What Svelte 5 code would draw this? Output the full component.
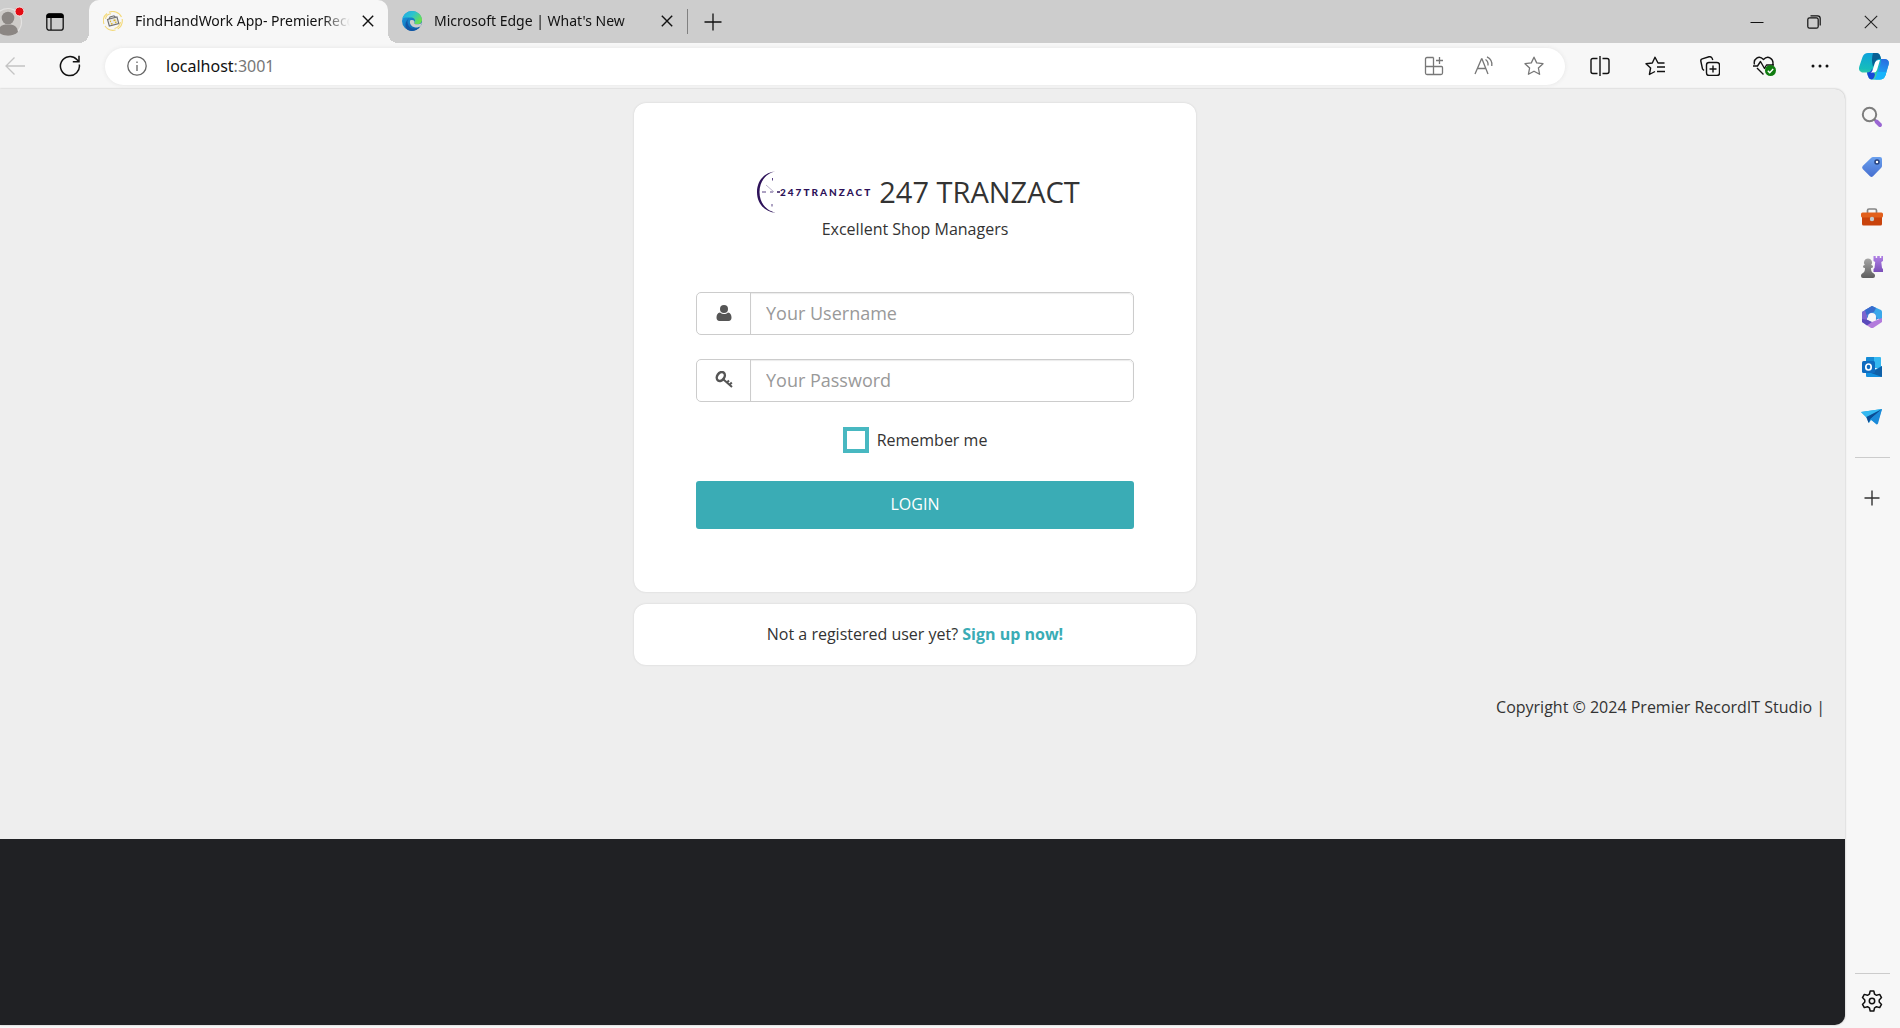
<script>
  let username = $state('');
  let password = $state('');
  let remember = $state(false);
</script>

{#snippet cross(size)}
  <svg width={size} height={size} viewBox="0 0 12 12" fill="none" stroke="currentColor" stroke-width="1.4"><path d="M.8.8l10.4 10.4M11.2.8L.8 11.2" /></svg>
{/snippet}

<div class="window">
  <header class="titlebar">
    <button class="avatar" aria-label="Profile">
      <svg width="30" height="30" viewBox="0 0 30 30">
        <circle cx="15" cy="15" r="13.5" fill="#cfccc9" stroke="#e4e3e2" stroke-width="1.2" />
        <circle cx="15" cy="11" r="6.3" fill="#8b8683" />
        <path d="M5 25c1-6 4-7.500 10-7.500s9 1.500 10 7.500c-5 5-15 5-20 0z" fill="#8b8683" />
        <circle cx="26.500" cy="4.500" r="4.500" fill="#e30b13" stroke="#f3e3e3" stroke-width="1" />
      </svg>
    </button>
    <button class="tab-actions" aria-label="Tab actions">
      <svg width="18" height="18" viewBox="0 0 18 18"><rect x=".8" y=".8" width="16.400" height="16.400" rx="2.500" fill="none" stroke="#111" stroke-width="1.300" /><path d="M.5 5V3Q.5.500 3 .5h12Q17.500.500 17.500 3v2z" fill="#000" /><path d="M5 5v12" stroke="#111" stroke-width="1.200" /></svg>
    </button>
    <div class="tab active">
      <svg width="20" height="20" viewBox="0 0 20 20" fill="none">
        <path d="M1 13A9.400 9.400 0 0 1 4 2.500M6 1.300C10-.5 16 .5 18.500 6M19.200 8c.5 4-1 8-4.500 10M12.500 19C8 20 4 18 2 15M2.500 8C3 5 5 3 8 2.800M17.500 11c-.5 3.500-2.500 5.500-6 6.500" stroke="#f3d979" stroke-width="1.100" />
        <path d="M4.500 8.500l9.500-2.500 1.800 6.500-9.500 2.500zM6 8l1-2 4-1.200 1.500 1.500" fill="#e9e9e6" stroke="#707070" stroke-width="1.100" />
        <path d="M7 10.500l1-.3M10.500 9.500l2-.5M8 13l1.500-.4M12 11.500l1.500-.4" stroke="#d9b429" stroke-width="1.500" />
      </svg>
      <span class="tab-title">FindHandWork App- PremierReco</span>
      <button class="tab-close" aria-label="Close tab">{@render cross(12)}</button>
    </div>
    <div class="tab">
      <svg width="20" height="20" viewBox="0 0 20 20">
        <defs>
          <linearGradient id="edgeTop" x1="0" y1="0" x2="1" y2=".6"><stop offset="0" stop-color="#1ea7e6" /><stop offset=".5" stop-color="#2cc3cf" /><stop offset="1" stop-color="#6be04f" /></linearGradient>
          <linearGradient id="edgeLow" x1="0" y1="0" x2="1" y2="1"><stop offset="0" stop-color="#1b9de2" /><stop offset="1" stop-color="#0c59a4" /></linearGradient>
        </defs>
        <circle cx="10" cy="10" r="10" fill="url(#edgeLow)" />
        <path d="M.3 8C1.500 3 5.500 0 10 0c6 0 10 4.500 10 8.700 0 3-2.300 4.600-5 4.600-2.200 0-3.300-.8-2.700-1.600 1.700-2.400.2-5.200-3.500-5.200C5 6.500 1.500 6 .3 8z" fill="url(#edgeTop)" />
        <path d="M8.800 6.500c-3.500 1-4.300 5-2.200 8.300 2 3 6.500 4.200 11.500 1.200C14 20.500 9 20.700 6 19 2 16.500 2.500 9 8.800 6.500z" fill="#1256a5" />
        <path d="M8.300 9.300c-1.300 2.700.5 6.500 5 7.200 2.300.2 4-.5 5.300-1.200l1.400-3.800c-1.500 1.500-3.300 1.800-5 1.800-2.200 0-3.300-.8-2.700-1.600.9-1.200-.6-3.800-4-2.400z" fill="#cdcdcd" />
      </svg>
      <span class="tab-title">Microsoft Edge | What's New</span>
      <button class="tab-close" aria-label="Close tab">{@render cross(12)}</button>
    </div>
    <button class="new-tab" aria-label="New tab">
      <svg width="18" height="18" viewBox="0 0 18 18" stroke="#111" stroke-width="1.300"><path d="M9 .5v17M.5 9h17" /></svg>
    </button>
    <div class="window-controls">
      <button aria-label="Minimize"><svg width="14" height="14" viewBox="0 0 14 14" stroke="#111"><path d="M.5 7.500h13" /></svg></button>
      <button aria-label="Restore"><svg width="14" height="14" viewBox="0 0 14 14" fill="none" stroke="#111" stroke-width="1.200"><rect x=".8" y="2.800" width="10.400" height="10.400" rx="1.800" /><path d="M3.500.8h7Q13.200.8 13.200 3.500v7" /></svg></button>
      <button aria-label="Close window"><svg width="14" height="14" viewBox="0 0 14 14" fill="none" stroke="#222" stroke-width="1.100"><path d="M.8.8l12.400 12.400M13.200.8L.8 13.200" /></svg></button>
    </div>
  </header>

  <div class="toolbar">
    <button class="nav back" aria-label="Back">
      <svg width="20" height="20" viewBox="0 0 20 20" fill="none" stroke="#c4c4c4" stroke-width="1.300"><path d="M20 10H1M9.500 1.500L1 10l8.500 8.500" /></svg>
    </button>
    <button class="nav refresh" aria-label="Refresh">
      <svg width="22" height="22" viewBox="0 0 22 22" fill="none" stroke="#111" stroke-width="1.500"><path d="M20.300 9.500A9.500 9.500 0 1 1 17.800 4.500L20 6.800M20 .8v6h-6.200" /></svg>
    </button>
    <div class="address">
      <svg class="info" width="20" height="20" viewBox="0 0 20 20" fill="none" stroke="#666" stroke-width="1.300"><circle cx="10" cy="10" r="9.200" /><path d="M10 9v6M10 5.500v1.600" /></svg>
      <div class="url"><span>localhost</span>:3001</div>
      <button aria-label="App available">
        <svg width="20" height="20" viewBox="0 0 20 20" fill="none" stroke="#777" stroke-width="1.300"><path d="M9.500 1.500H3Q1.500 1.500 1.500 3v14Q1.500 18.500 3 18.500h14q1.500 0 1.500-1.500v-5.500q0-1-1-1H1.500M9.500 1.500v17M15.500 1v7M12 4.500h7" /></svg>
      </button>
      <button aria-label="Read aloud">
        <svg width="20" height="20" viewBox="0 0 20 20" fill="none" stroke="#777" stroke-width="1.300"><path d="M1 18L7.500 3h.5l6 15M3.300 12.500h8.500M11.500 3.500q3 2 2.500 6M13 .8q5.800 3 4.800 9.200" /></svg>
      </button>
      <button aria-label="Add to favorites">
        <svg width="20" height="20" viewBox="0 0 20 20" fill="none" stroke="#777" stroke-width="1.300" stroke-linejoin="round"><path d="M10 1.200l2.700 5.700 6.300.8-4.600 4.300 1.200 6.300L10 15.200l-5.600 3.100L5.600 12 1 7.700l6.300-.8z" /></svg>
      </button>
    </div>
    <div class="tools">
      <button aria-label="Split screen"><svg width="20" height="20" viewBox="0 0 20 20" fill="none" stroke="#111" stroke-width="1.400"><path d="M7.500 2.500H3Q1 2.500 1 4.500v11q0 2 2 2h4.500M12.500 2.500H17q2 0 2 2v11q0 2-2 2h-4.500M10 0v20" /></svg></button>
      <button aria-label="Favorites"><svg width="20" height="20" viewBox="0 0 20 20" fill="none" stroke="#111" stroke-width="1.400" stroke-linejoin="round"><path d="M19.500 7H13L10 1.200 7.300 7 1 7.800 5.600 12l-1.200 6.500L10 15.500M12 11h8M12 15.500h8" /></svg></button>
      <button aria-label="Collections"><svg width="20" height="20" viewBox="0 0 20 20" fill="none" stroke="#111" stroke-width="1.400"><path d="M4 14.500L2.500 13 .8 5Q.5 3.300 2.200 2.800L9 .8q2-.5 3 1.200l.8 2" /><rect x="6.500" y="6.500" width="13" height="13" rx="2.500" /><path d="M13 9.500v7M9.500 13h7" /></svg></button>
      <button aria-label="Browser essentials"><svg width="24" height="20" viewBox="0 0 24 20" fill="none" stroke="#111" stroke-width="1.400" stroke-linejoin="round"><path d="M1.500 8.500C0 3 6-1.500 10.500 3.500 15-1.500 21 3 19.800 8.500M0 10h4.500L7.500 5.500l4 7L13.500 9H21M4 12l6.500 6.500" /><circle cx="17.500" cy="14.500" r="5.500" fill="#107c10" stroke="none" /><path d="M14.800 14.800l1.900 1.900 3.500-3.700" stroke="#fff" /></svg></button>
      <button aria-label="Settings and more"><svg width="18" height="18" viewBox="0 0 18 18" fill="#111"><circle cx="2" cy="9" r="1.500" /><circle cx="9" cy="9" r="1.500" /><circle cx="16" cy="9" r="1.500" /></svg></button>
      <button class="copilot" aria-label="Copilot">
        <svg width="30" height="28" viewBox="0 0 30 28">
          <defs>
            <linearGradient id="copA" x1=".3" y1="0" x2=".2" y2="1"><stop offset="0" stop-color="#0ea2dc" /><stop offset=".6" stop-color="#16bdbb" /><stop offset="1" stop-color="#66df8b" /></linearGradient>
            <linearGradient id="copB" x1=".6" y1="0" x2=".4" y2="1"><stop offset="0" stop-color="#2a6ddf" /><stop offset="1" stop-color="#16b5fb" /></linearGradient>
          </defs>
          <path d="M12 1h6q3 0 4 6h4q5 1 3.500 6l-3 10q-1.300 4.500-6 4.500h-8q-3.500-.5-4.500-7H3q-4-1-2.700-6L3.500 5Q5 1 9 1z" fill="url(#copA)" />
          <path d="M14 1h4q3 0 4 6-4-1-6 4l-2 4q-2-8 0-14z" fill="#075f93" />
          <path d="M22 7h4q5 1 3.500 6l-3 10q-1.300 4.500-6 4.500h-4l5-16q.5-2.500.5-4.500z" fill="url(#copB)" />
          <path d="M8 20.500q4 0 5-4l3 6q-1 5-3.500 5-3.500-.5-4.500-7z" fill="#1748d8" />
          <path d="M16 27.500h5q4 0 5.500-4.500l.8-3h-9q-1 7.500-5.800 7.500z" fill="#18b4fb" />
          <path d="M13.500 18.500l2.500-8q.8-2.500 3.500-2.500h1.500l-3 10q-.8 2.500-3.500 2.500h-3q1.500-.5 2-2z" fill="#fff" />
        </svg>
      </button>
    </div>
  </div>

  <div class="body">
    <div class="viewport">
      <main>
        <section class="card login">
          <h1>
            <svg class="logo" width="123" height="42" viewBox="0 0 123 42" role="img" aria-label="247Tranzact logo">
              <path d="M26 .3C15 1 7 9 7 21s8 20 19 20.700C16.500 40 9.500 32 9.500 21S16.500 2 26 .3z" fill="#2d1259" />
              <path d="M12 21h4M20 21h3M22.500 7v2.500M22 33v2.500" stroke="#5b4585" />
              <path d="M16 14l8 7" stroke="#bbb3cc" />
              <path d="M27 21h3" stroke="#2d1259" stroke-width="1.300" />
              <text x="30" y="25">247TRANZACT</text>
            </svg>
            <span>247 TRANZACT</span>
          </h1>
          <p class="tagline">Excellent Shop Managers</p>
          <form onsubmit={(e) => e.preventDefault()}>
            <div class="field">
              <label for="username" aria-label="Username">
                <svg width="16" height="16" viewBox="0 0 16 16" fill="#555"><circle cx="8" cy="4" r="4" /><path d="M4 7.500c2.500 2 5.500 2 8 0 2.500.3 3.500 2.500 3.500 5 0 2-1 3.500-3 3.500h-9c-2 0-3-1.500-3-3.500 0-2.500 1-4.700 3.500-5z" /></svg>
              </label>
              <input id="username" type="text" placeholder="Your Username" bind:value={username} />
            </div>
            <div class="field">
              <label for="password" aria-label="Password">
                <svg width="18" height="18" viewBox="0 0 18 18" fill="none" stroke="#555" stroke-width="2"><ellipse cx="5.800" cy="5.500" rx="3.600" ry="4.800" transform="rotate(35 5.800 5.500)" stroke-width="2.500" /><path d="M8.500 8.500l8.500 7.500M12 11.500l2-2M14.500 13.800l2.300-2.300" /></svg>
              </label>
              <input id="password" type="password" placeholder="Your Password" bind:value={password} />
            </div>
            <label class="remember"><input type="checkbox" bind:checked={remember} />Remember me</label>
            <button class="submit" type="submit">LOGIN</button>
          </form>
        </section>
        <section class="card signup">Not a registered user yet? <a href="#signup">Sign up now!</a></section>
      </main>
      <footer>Copyright © 2024 Premier RecordIT Studio |</footer>
      <div class="backdrop"></div>
    </div>

    <aside class="sidebar">
      <button aria-label="Search"><svg width="22" height="22" viewBox="0 0 22 22" fill="none"><circle cx="8.500" cy="8.500" r="6.700" stroke="#7d7d7d" stroke-width="2" /><path d="M13.300 13.300l2 2" stroke="#777" stroke-width="2" /><path d="M15.500 15.500l3.500 3.500" stroke="#9a66d2" stroke-width="4" stroke-linecap="round" /></svg></button>
      <button aria-label="Shopping">
        <svg width="22" height="22" viewBox="0 0 22 22"><defs><linearGradient id="tag" x1="0" y1="0" x2="0" y2="1"><stop offset="0" stop-color="#6aa0ee" /><stop offset="1" stop-color="#466fd0" /></linearGradient></defs><path d="M12 1h7q2 0 2 2v7q0 1-1 2l-8 8.300q-1.500 1.200-3 0L1.700 13q-1.200-1.500 0-3L10 2q1-1 2-1z" fill="url(#tag)" /><circle cx="16" cy="6" r="2" fill="#fff" stroke="#28427d" stroke-width="1.500" /></svg>
      </button>
      <button aria-label="Tools"><svg width="22" height="22" viewBox="0 0 22 22"><path d="M6.500 7V4.500Q6.500 3 8 3h6q1.500 0 1.500 1.500V7" fill="none" stroke="#858585" stroke-width="1.700" /><path d="M1 11h20v7q0 1.500-1.500 1.500h-17Q1 19.500 1 18z" fill="#c9430c" /><rect y="6.500" width="22" height="5" rx="1.500" fill="#e2601d" /><circle cx="11" cy="13" r="2.200" fill="#c4c9cb" /></svg></button>
      <button aria-label="Games">
        <svg width="22" height="24" viewBox="0 0 22 24"><defs><linearGradient id="rook" x1="0" y1="0" x2="0" y2="1"><stop offset="0" stop-color="#b181e6" /><stop offset="1" stop-color="#7a4fb8" /></linearGradient><linearGradient id="pawn" x1="0" y1="0" x2="0" y2="1"><stop offset="0" stop-color="#a6a6a6" /><stop offset="1" stop-color="#5e5e5e" /></linearGradient></defs><path d="M12.500 1h2.200v2h1.500V1h2.600v2h1.500V1H22v5l-1.700 1 .7 6 1 1v3h-9.500v-3l1-1 .7-6-1.700-1z" fill="url(#rook)" /><path d="M7 3.500a4 4 0 0 1 3.200 6.500q1.800 0 1.800 1.500t-2 1.500c0 3 .8 4.500 2.500 5.300q1.500.7 1.500 2.200V21q0 2-2 2H2q-2 0-2-2v-.5q0-1.500 1.500-2.200C3.200 17.500 4 16 4 13q-2 0-2-1.500T3.800 10A4 4 0 0 1 7 3.500z" fill="url(#pawn)" /></svg>
      </button>
      <button aria-label="Microsoft 365">
        <svg width="22" height="22" viewBox="0 0 22 22"><path d="M11 0l9 5v6l-5 3-1-5-4-2-6 8-3-2V6z" fill="#3f86db" /><path d="M11 0L1 6v10l5 2.500V9l5-3z" fill="#7d66cf" /><path d="M11 0l9 4q1 .5 1 2v9l-6-4V8l-7-4z" fill="#3aa8ea" /><path d="M11 0l4 2-2 4h-2L5.500 9 4 4z" fill="#386ccd" /><path d="M21 12v4l-9 6q-1 .5-2 0l-6-4 3-1 4-1z" fill="#b37bdc" /><path d="M1 13v3l5 3.500 5-3.500-4-2z" fill="#5a4abb" /><circle cx="11" cy="11" r="4" fill="#f7f7f7" /></svg>
      </button>
      <button aria-label="Outlook"><svg width="22" height="22" viewBox="0 0 22 22"><rect x="5" y="1" width="15" height="11" rx="1" fill="#35b8f1" /><path d="M5 3q0-2 1-2h7v5H5z" fill="#158ad5" /><path d="M5 11l8 3 8-4v10q0 1-1 1H6q-1 0-1-1z" fill="#1490df" /><path d="M21 10L10 17l11 4z" fill="#0f60a8" /><rect x="1" y="5" width="13" height="12" rx="1.500" fill="#0f6cc0" /><ellipse cx="7.500" cy="11" rx="2.700" ry="3" fill="none" stroke="#fff" stroke-width="1.700" /></svg></button>
      <button aria-label="Drop"><svg width="22" height="22" viewBox="0 0 22 22"><path d="M0 6l21-3-5 15-6-4-2 3-3-6z" fill="#229fe0" /><path d="M0 6l21-3L5.500 11z" fill="#34b9f2" /><path d="M21 3L5.500 11l2 6 2-4z" fill="#0c4c94" /><path d="M21 3L9.500 13l6 5.500q1 0 1.500-1z" fill="#1b8ad9" /></svg></button>
      <hr />
      <button class="add" aria-label="Customize"><svg width="16" height="16" viewBox="0 0 16 16" stroke="#333" stroke-width="1.400"><path d="M8 .5v15M.5 8h15" /></svg></button>
      <hr class="bottom-rule" />
      <button class="gear" aria-label="Settings"><svg width="22" height="22" viewBox="0 0 22 22" fill="none" stroke="#111" stroke-width="1.500" stroke-linejoin="round"><path d="M9.200 1h3.600l.8 3.200 1.900 1.100 3.200-.9 1.800 3.200L18.200 10v2l2.300 2.400-1.800 3.200-3.200-.9-1.900 1.100-.8 3.200H9.200l-.8-3.200-1.900-1.100-3.200.9-1.800-3.200L3.800 12v-2L1.500 7.600l1.800-3.200 3.200.9 1.900-1.100z" /><circle cx="11" cy="11" r="2.700" /></svg></button>
    </aside>
  </div>
</div>

<style>
  :global(body) { margin: 0; }
  * { box-sizing: border-box; }
  .window {
    min-height: 100vh;
    display: flex;
    flex-direction: column;
    background: #f7f7f7;
    overflow-x: hidden;
    font-family: "Open Sans", "Noto Sans", sans-serif;
    font-size: 16px;
    line-height: 22px;
    color: #333;
  }
  button {
    display: flex;
    align-items: center;
    justify-content: center;
    padding: 0;
    border: 0;
    background: none;
    color: #111;
    font: inherit;
    cursor: pointer;
  }
  svg { display: block; flex: none; }

  .titlebar {
    display: flex;
    align-items: stretch;
    height: 43px;
    padding-right: 1px;
    background: #cdcdcd;
  }
  .avatar { width: 23px; justify-content: flex-end; overflow: visible; }
  .avatar svg { overflow: visible; }
  .tab-actions { width: 66px; padding-right: 2px; }
  .tab {
    width: 299px;
    display: flex;
    align-items: center;
    gap: 12px;
    padding: 0 14px 2px;
    color: #111;
    font-family: "Noto Sans", "Open Sans", sans-serif;
    font-size: 14px;
    line-height: 20px;
  }
  .tab.active { position: relative; background: #f7f7f7; border-radius: 10px 10px 0 0; }
  .tab.active::before,
  .tab.active::after {
    content: "";
    position: absolute;
    bottom: 0;
    width: 10px;
    height: 10px;
  }
  .tab.active::before { right: 100%; background: radial-gradient(circle at 0 0, #cdcdcd 10px, #f7f7f7 10px); }
  .tab.active::after { left: 100%; background: radial-gradient(circle at 100% 0, #cdcdcd 10px, #f7f7f7 10px); }
  .tab-title {
    flex: 1;
    min-width: 0;
    white-space: nowrap;
    mask-image: linear-gradient(to left, transparent, #000 28px);
  }
  .tab-close { width: 12px; height: 20px; }
  .new-tab { width: 52px; position: relative; }
  .new-tab::before { content: ""; position: absolute; left: 0; top: 9px; width: 1px; height: 25px; background: #808080; }
  .window-controls { margin-left: auto; display: flex; }
  .window-controls button { width: 57px; }

  .toolbar { display: flex; align-items: center; height: 46px; }
  .nav { height: 36px; }
  .back { width: 30px; }
  .refresh { width: 75px; padding-left: 5px; }
  .address {
    flex: 1;
    display: flex;
    align-items: center;
    height: 37px;
    padding: 0 6px 0 22px;
    border-radius: 19px;
    background: #fff;
    box-shadow: 0 0 4px #e4e4e4;
  }
  .url { flex: 1; padding-left: 19px; font-family: "Noto Sans", sans-serif; font-size: 16px; color: #777; }
  .url span { color: #111; }
  .address button { width: 50px; height: 36px; }
  .tools { display: flex; padding-left: 7px; }
  .tools button { width: 55px; height: 36px; }
  .tools .copilot { width: 53px; }

  .body { flex: 1; display: flex; }
  .viewport {
    flex: 1;
    min-width: 0;
    display: flex;
    flex-direction: column;
    margin-bottom: 3px;
    overflow: hidden;
    background: #eee;
    border-radius: 0 10px 10px 0;
    box-shadow: 0 0 2px #aaa;
  }
  main { display: flex; flex-direction: column; align-items: center; gap: 12px; padding: 14px 15px 0 0; }
  .card {
    width: 100%;
    max-width: 562px;
    border-radius: 12px;
    background: #fff;
    box-shadow: 0 0 2px #ccc;
    text-align: center;
  }
  .login { padding: 68px 62px 63px; }
  h1 {
    display: flex;
    align-items: center;
    justify-content: center;
    gap: 6px;
    margin: 0;
    font-size: 29px;
    line-height: 42px;
    font-weight: 400;
  }
  .logo text {
    font-family: Lato, sans-serif;
    font-size: 10px;
    font-weight: 900;
    letter-spacing: 2px;
    fill: #2d1259;
  }
  .tagline { margin: 5px 0 0; }
  form { margin-top: 52px; }
  .field {
    display: flex;
    height: 43px;
    margin-bottom: 24px;
    border: 1px solid #ccc;
    border-radius: 5px;
  }
  .field label { width: 54px; display: grid; place-items: center; padding-bottom: 2px; border-right: 1px solid #ccc; }
  .field input {
    flex: 1;
    min-width: 0;
    padding: 0 15px 2px;
    border: 0;
    border-radius: 0 5px 5px 0;
    background: #fff;
    box-shadow: inset 0 1px 1px #ececec;
    color: #555;
    font: inherit;
    font-size: 18px;
    outline: none;
  }
  .field input::placeholder { color: #999; opacity: 1; }
  .remember { display: flex; align-items: center; justify-content: center; gap: 8px; height: 28px; }
  .remember input {
    appearance: none;
    width: 26px;
    height: 26px;
    margin: 0;
    border: 4px solid #48b8c1;
    background: #fff;
  }
  .remember input:checked { background: #48b8c1; }
  .submit {
    width: 100%;
    height: 48px;
    margin-top: 27px;
    padding-bottom: 2px;
    border-radius: 3px;
    background: #3aacb5;
    color: #fff;
  }
  .signup { padding: 19px 20px 20px; }
  .signup a { color: #3aacb5; font-weight: 700; text-decoration: none; }
  footer { padding: 31px 20px 121px; text-align: right; }
  .backdrop { flex: 1; background: #202124; }

  .sidebar {
    width: 55px;
    display: flex;
    flex-direction: column;
    align-items: center;
    padding: 3px 1px 0 0;
  }
  .sidebar button { width: 50px; height: 50px; }
  .sidebar hr { width: 35px; height: 1px; margin: 15px 0; border: 0; background: #ccc; }
  .sidebar .bottom-rule { margin: auto 0 0; }
  .sidebar .gear { height: 54px; }
</style>
